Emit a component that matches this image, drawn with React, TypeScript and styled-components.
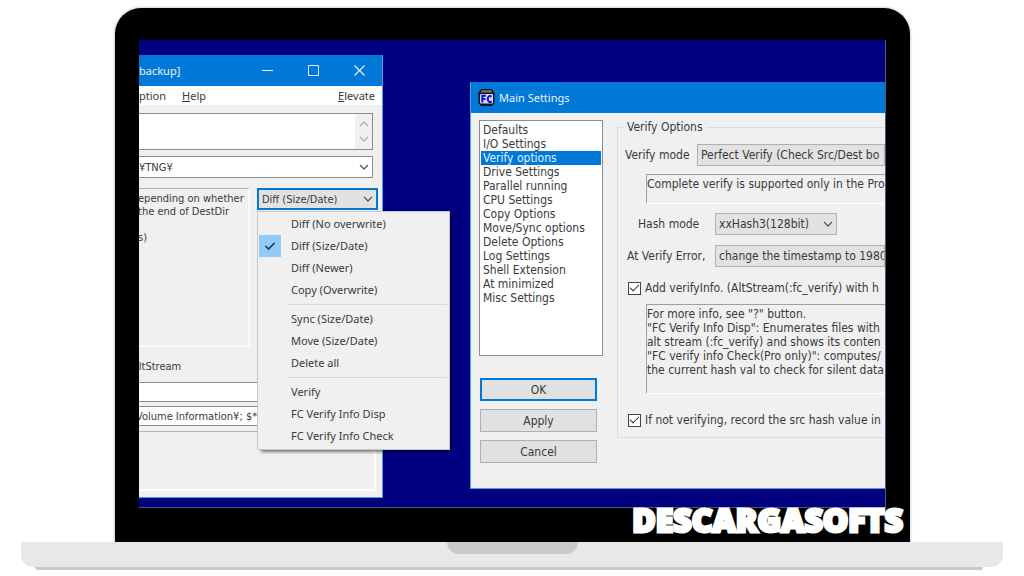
import React from 'react';
import styled, { createGlobalStyle, css } from 'styled-components';

const dialogFont = '"DejaVu Sans Condensed", "DejaVu Sans", sans-serif';
const systemFont = '"Noto Sans", "Open Sans", sans-serif';

const GlobalStyle = createGlobalStyle`
  *, *::before, *::after { box-sizing: border-box; }
  body { margin: 0; background: #fff; font: 12px/14px ${dialogFont}; color: #3a3a3a; }
  button, input, select, textarea { margin: 0; padding: 0; font: inherit; color: inherit; border-radius: 0; outline: none; }
`;

/* Laptop */

const Laptop = styled.main`
  padding-top: 8px;
  overflow: hidden;
`;

const Lid = styled.section`
  position: relative;
  margin: 0 114px 0 115px;
  padding: 32px 24px 35px;
  background: #000;
  border-radius: 26px 26px 0 0;
  box-shadow: 0 0 3px #aaa;
`;

const Desktop = styled.div`
  display: flex;
  align-items: flex-start;
  gap: 87px;
  padding-bottom: 9px;
  overflow: hidden;
  background: #000080;
  border: solid #55557f;
  border-width: 0 1px 1px 0;
`;

const Brand = styled.strong`
  position: absolute;
  right: 7px;
  bottom: 4px;
  font: 900 32px/38px "Noto Sans", sans-serif;
  color: #fff;
  -webkit-text-stroke: 3px #fff;
`;

const Base = styled.div`
  display: flex;
  justify-content: center;
  position: relative;
  height: 25px;
  margin: -1px 21px 0;
  background: #e8e8e8;
  border-radius: 0 0 12px 12px;
`;

const Notch = styled.div`
  width: 131px;
  height: 12px;
  background: #c9c9c9;
  border-radius: 0 0 12px 12px;
`;

const Foot = styled.div`
  height: 3px;
  margin: 0 41px 0 35px;
  background: #c9c9c9;
  border-radius: 0 0 3px 3px;
`;

/* Windows */

const windowFrame = css`
  background: #f0f0f0;
  border: solid #4aa0e6;
  border-width: 0 1px 1px;
`;

const BackupWindow = styled.section`
  ${windowFrame}
  flex: none;
  width: 252px;
  margin: 15px 0 0 -8px;
`;

const SettingsWindow = styled.section`
  ${windowFrame}
  flex: 1;
  min-width: 0;
  margin-top: 42px;
  padding-bottom: 17px;
  border-right: 0;
`;

const TitleBar = styled.header`
  display: flex;
  align-items: center;
  gap: 4px;
  height: 31px;
  padding: 0 2px 0 7px;
  background: #0078d7;
  color: #eaf4fc;
  font: 11px/16px ${systemFont};
`;

const Title = styled.h1`
  flex: 1;
  margin: 0;
  font: inherit;
  white-space: nowrap;
`;

const CaptionButton = styled.button`
  display: grid;
  place-items: center;
  width: 42px;
  height: 31px;
  border: 0;
  background: none;
`;

const MenuBar = styled.nav`
  display: flex;
  align-items: center;
  gap: 16px;
  height: 19px;
  padding: 0 7px;
  background: #fff;
  font: 11px/18px ${systemFont};
`;

const MenuBarItem = styled.button<{ $end?: boolean }>`
  border: 0;
  background: none;
  margin-left: ${p => (p.$end ? 'auto' : 0)};
`;

/* Backup window body */

const BackupBody = styled.div`
  display: flex;
  flex-direction: column;
  padding: 8px 4px 6px 0;
  font-size: 11px;
  line-height: 13px;
`;

const SourceField = styled.div`
  display: flex;
  height: 37px;
  margin-right: 5px;
  border: 1px solid #8c8c8c;
  background: #fff;
`;

const SourceText = styled.textarea`
  flex: 1;
  min-width: 0;
  border: 0;
  resize: none;
  background: none;
`;

const Scroller = styled.div`
  display: flex;
  flex-direction: column;
  justify-content: space-around;
  align-items: center;
  width: 17px;
  padding: 2px 0;
  background: #f0f0f0;
`;

const DestField = styled.label`
  display: flex;
  align-items: center;
  height: 22px;
  margin: 6px 5px 10px 0;
  padding-right: 3px;
  border: 1px solid #8c8c8c;
  background: #fff;
`;

const FieldInput = styled.input`
  flex: 1;
  min-width: 0;
  padding-left: 6px;
  border: 0;
  background: none;
`;

const ModeRow = styled.div`
  display: flex;
  align-items: flex-start;
  gap: 7px;
`;

const Summary = styled.div`
  flex: 1;
  min-width: 0;
  height: 159px;
  padding: 3px 0 0 6px;
  border: solid #b4b4b4;
  border-width: 1px 0 0;
  border-bottom: 2px solid #fafafa;
  border-right: 2px solid #fafafa;
  white-space: pre;
`;

const FilterLabel = styled.label`
  margin: 13px 0 9px;
`;

const FilterInput = styled.input`
  width: 100%;
  height: 20px;
  margin-bottom: 4px;
  padding-left: 3px;
  border: 1px solid #8c8c8c;
  background: #fff;
`;

const LogPanel = styled.div`
  height: 60px;
  margin: 1px 2px 0 0;
  border: solid #fff;
  border-width: 0 2px 2px 0;
  border-top: 1px solid #b4b4b4;
`;

/* Drop-downs */

const SelectBox = styled.div<{ $width?: number; $focused?: boolean }>`
  position: relative;
  display: flex;
  width: ${p => (p.$width ? `${p.$width}px` : 'auto')};
  height: 22px;
  border: ${p => (p.$focused ? '2px solid #0078d7' : '1px solid #b0b0b0')};
  background: #e2e2e2;
  flex: ${p => (p.$width ? 'none' : '1')};
  min-width: 0;
`;

const Select = styled.select`
  appearance: none;
  width: 100%;
  padding-left: 3px;
  border: 0;
  background: none;
  text-overflow: clip;
`;

const Arrow = styled.span`
  position: absolute;
  top: 50%;
  right: 3px;
  display: flex;
  transform: translateY(-50%);
  pointer-events: none;
`;

const Popup = styled.div`
  position: absolute;
  z-index: 2;
  top: 21px;
  left: -2px;
  width: 193px;
  padding: 1px 1px 2px;
  border: 1px solid #c6c6c6;
  background: #f0f0f0;
  box-shadow: 3px 3px 3px -1px rgba(0, 0, 0, 0.5);
  font: 11px/22px ${systemFont};
`;

const PopupItem = styled.button`
  display: grid;
  grid-template-columns: 22px 1fr;
  column-gap: 10px;
  align-items: center;
  width: 100%;
  height: 22px;
  border: 0;
  background: none;
  text-align: left;
  white-space: nowrap;
`;

const CheckCell = styled.span<{ $on: boolean }>`
  display: grid;
  place-items: center;
  height: 22px;
  background: ${p => (p.$on ? '#91c9f7' : 'none')};
`;

const Separator = styled.hr`
  height: 1px;
  margin: 3px 1px 3px 29px;
  border: 0;
  background: #d9d9d9;
`;

/* Settings window body */

const SettingsBody = styled.div`
  display: grid;
  grid-template-columns: 124px minmax(0, 1fr);
  column-gap: 14px;
  padding: 7px 0 0 8px;
`;

const Sidebar = styled.div`
  display: flex;
  flex-direction: column;
`;

const PageList = styled.div`
  height: 236px;
  margin-bottom: 22px;
  padding: 2px 1px;
  border: 1px solid #8c8c8c;
  background: #fff;
`;

const PageItem = styled.button<{ $selected: boolean }>`
  display: block;
  width: 100%;
  height: 14px;
  padding-left: 2px;
  border: 0;
  text-align: left;
  white-space: nowrap;
  background: ${p => (p.$selected ? '#0078d7' : 'none')};
  color: ${p => (p.$selected ? '#e4f1fb' : 'inherit')};
`;

const PushButton = styled.button<{ $primary?: boolean }>`
  height: 23px;
  margin: 0 6px 8px 1px;
  border: ${p => (p.$primary ? '2px solid #0078d7' : '1px solid #b0b0b0')};
  background: #e1e1e1;
`;

const Group = styled.fieldset`
  min-width: 0;
  margin: 0;
  padding: 10px 0 9px;
  border: 1px solid #dcdcdc;
  border-right: 0;
  white-space: nowrap;
  align-self: start;
`;

const Legend = styled.legend`
  margin-left: 6px;
  padding: 0 3px;
  line-height: 14px;
`;

const FieldRow = styled.div<{ $indent: number; $label: number }>`
  display: grid;
  grid-template-columns: ${p => p.$label}px minmax(0, 1fr);
  align-items: center;
  margin-bottom: 10px;
  padding-left: ${p => p.$indent}px;
`;

const Note = styled.div<{ $height: number }>`
  height: ${p => p.$height}px;
  margin: -2px 0 9px 28px;
  padding-top: 2px;
  overflow: hidden;
  border: solid #a0a0a0;
  border-width: 1px 0 0 1px;
  border-bottom: 1px solid #fff;
  white-space: pre;
`;

const CheckRow = styled.label<{ $last?: boolean }>`
  display: flex;
  align-items: center;
  gap: 4px;
  height: 16px;
  margin: ${p => (p.$last ? '18px 0 0' : '13px 0 10px')};
  padding-left: 10px;
`;

const CheckBox = styled.input`
  appearance: none;
  display: grid;
  place-items: center;
  flex: none;
  width: 13px;
  height: 13px;
  border: 1px solid #444;
  background: #fff;

  &:checked::before {
    content: '';
    width: 9px;
    height: 5px;
    margin-bottom: 3px;
    border: solid #333;
    border-width: 0 0 1px 1px;
    transform: rotate(-45deg);
  }
`;

const Chevron = ({ up = false, color = '#555' }: { up?: boolean; color?: string }) => (
  <svg width="10" height="6" viewBox="0 0 10 6" fill="none" stroke={color} strokeWidth="1.3" aria-hidden="true">
    <path d={up ? 'M1 5 5 1l4 4' : 'M1 1l4 4 4-4'} />
  </svg>
);

const AppIcon = () => (
  <svg width="17" height="17" viewBox="0 0 17 17" aria-hidden="true">
    <path d="M3.5 0h10L16.500 3.500V14l-2.500 3H3L.5 14V3.500z" fill="#101020" />
    <path d="M4 1.200h9l1.500 2.300h-12z" fill="#77776b" />
    <rect x="2" y="5" width="13" height="9.500" rx="1" fill="#d3d9ff" />
    <path d="M4.300 13.500V6.800H8M4.300 10h3.200M13.500 7.800C12 6.200 9.800 6.800 9.800 10s2.200 3.800 3.700 2.200" fill="none" stroke="#1010d8" strokeWidth="2" />
  </svg>
);

const modeGroups = [
  ['Diff (No overwrite)', 'Diff (Size/Date)', 'Diff (Newer)', 'Copy (Overwrite)'],
  ['Sync (Size/Date)', 'Move (Size/Date)', 'Delete all'],
  ['Verify', 'FC Verify Info Disp', 'FC Verify Info Check'],
];
const currentMode = 'Diff (Size/Date)';

const pages = [
  'Defaults', 'I/O Settings', 'Verify options', 'Drive Settings', 'Parallel running', 'CPU Settings',
  'Copy Options', 'Move/Sync options', 'Delete Options', 'Log Settings', 'Shell Extension', 'At minimized',
  'Misc Settings',
];

const summary = `epending on whether
the end of DestDir

s)`;

const verifyNote = `For more info, see "?" button.
"FC Verify Info Disp": Enumerates files with
alt stream (:fc_verify) and shows its conten
"FC verify info Check(Pro only)": computes/
the current hash val to check for silent data`;

const ModePopup = () => (
  <Popup role="menu">
    {modeGroups.map((items, i) => (
      <React.Fragment key={items[0]}>
        {i > 0 && <Separator />}
        {items.map(item => (
          <PopupItem key={item} role="menuitemradio" aria-checked={item === currentMode}>
            <CheckCell $on={item === currentMode}>
              {item === currentMode && (
                <svg width="12" height="10" viewBox="0 0 12 10" fill="none" stroke="#1c3e5c" strokeWidth="1.700" aria-hidden="true">
                  <path d="M1.500 5l3 3L10.500 2" />
                </svg>
              )}
            </CheckCell>
            {item}
          </PopupItem>
        ))}
      </React.Fragment>
    ))}
  </Popup>
);

const Backup = () => (
  <BackupWindow>
    <TitleBar>
      <Title>backup]</Title>
      <CaptionButton aria-label="Minimize">
        <svg width="11" height="11" stroke="#e4f1fb"><path d="M0 5.500h11" /></svg>
      </CaptionButton>
      <CaptionButton aria-label="Maximize">
        <svg width="11" height="11" fill="none" stroke="#e4f1fb"><path d="M.5.5h10v10H.5z" /></svg>
      </CaptionButton>
      <CaptionButton aria-label="Close">
        <svg width="11" height="11" stroke="#e4f1fb" strokeWidth="1.200"><path d="M.5.5l10 10M10.500.5l-10 10" /></svg>
      </CaptionButton>
    </TitleBar>
    <MenuBar>
      <MenuBarItem>ption</MenuBarItem>
      <MenuBarItem><u>H</u>elp</MenuBarItem>
      <MenuBarItem $end><u>E</u>levate</MenuBarItem>
    </MenuBar>
    <BackupBody>
      <SourceField>
        <SourceText aria-label="Source" />
        <Scroller>
          <Chevron up color="#b0b0b0" />
          <Chevron color="#b0b0b0" />
        </Scroller>
      </SourceField>
      <DestField>
        <FieldInput aria-label="DestDir" defaultValue="¥TNG¥" />
        <Chevron />
      </DestField>
      <ModeRow>
        <Summary>{summary}</Summary>
        <SelectBox $width={121} $focused>
          <Select aria-label="Mode" defaultValue={currentMode}>
            {modeGroups.flat().map(m => <option key={m}>{m}</option>)}
          </Select>
          <Arrow><Chevron /></Arrow>
          <ModePopup />
        </SelectBox>
      </ModeRow>
      <FilterLabel htmlFor="include">AltStream</FilterLabel>
      <FilterInput id="include" />
      <FilterInput aria-label="Exclude" defaultValue="Volume Information¥; $*¥" />
      <LogPanel />
    </BackupBody>
  </BackupWindow>
);

const Settings = () => (
  <SettingsWindow>
    <TitleBar>
      <AppIcon />
      <Title>Main Settings</Title>
    </TitleBar>
    <SettingsBody>
      <Sidebar>
        <PageList>
          {pages.map(p => <PageItem key={p} $selected={p === 'Verify options'}>{p}</PageItem>)}
        </PageList>
        <PushButton $primary>OK</PushButton>
        <PushButton>Apply</PushButton>
        <PushButton>Cancel</PushButton>
      </Sidebar>
      <Group>
        <Legend>Verify Options</Legend>
        <FieldRow $indent={7} $label={72}>
          <label htmlFor="verify">Verify mode</label>
          <SelectBox>
            <Select id="verify"><option>Perfect Verify (Check Src/Dest bo</option></Select>
          </SelectBox>
        </FieldRow>
        <Note $height={30}>Complete verify is supported only in the Pro</Note>
        <FieldRow $indent={20} $label={77}>
          <label htmlFor="hash">Hash mode</label>
          <SelectBox $width={122}>
            <Select id="hash"><option>xxHash3(128bit)</option></Select>
            <Arrow><Chevron /></Arrow>
          </SelectBox>
        </FieldRow>
        <FieldRow $indent={9} $label={88}>
          <label htmlFor="error">At Verify Error,</label>
          <SelectBox>
            <Select id="error"><option>change the timestamp to 1980</option></Select>
          </SelectBox>
        </FieldRow>
        <CheckRow>
          <CheckBox type="checkbox" defaultChecked />
          Add verifyInfo. (AltStream(:fc_verify) with h
        </CheckRow>
        <Note $height={90}>{verifyNote}</Note>
        <CheckRow $last>
          <CheckBox type="checkbox" defaultChecked />
          If not verifying, record the src hash value in
        </CheckRow>
      </Group>
    </SettingsBody>
  </SettingsWindow>
);

export default function App() {
  return (
    <>
      <GlobalStyle />
      <Laptop>
        <Lid>
          <Desktop>
            <Backup />
            <Settings />
          </Desktop>
          <Brand>DESCARGASOFTS</Brand>
        </Lid>
        <Base><Notch /></Base>
        <Foot />
      </Laptop>
    </>
  );
}
